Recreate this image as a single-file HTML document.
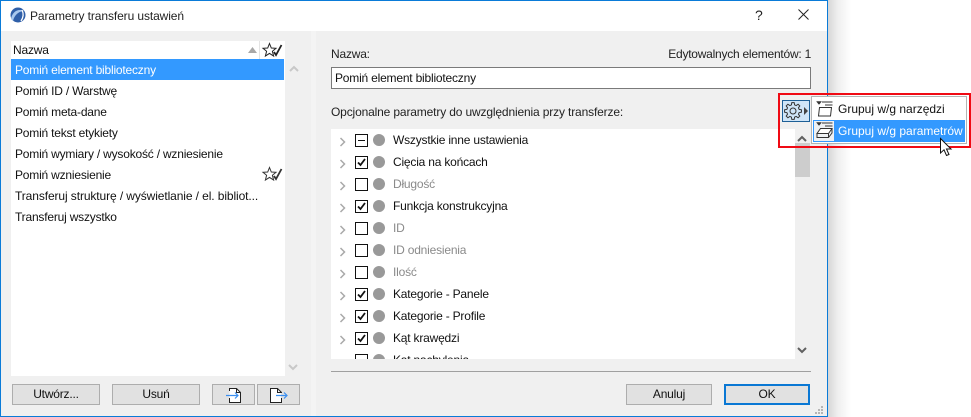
<!DOCTYPE html>
<html><head><meta charset="utf-8"><style>
html,body{margin:0;padding:0;background:#fff}
#p{position:relative;width:971px;height:417px;overflow:hidden;background:#fff;font-family:"Liberation Sans",sans-serif;font-size:12px;color:#111;letter-spacing:-.2px}
#p div{position:absolute;white-space:nowrap;box-sizing:border-box}
.t{line-height:16px;height:16px}
.btn{background:#e1e1e1;border:1px solid #adadad;height:21px;top:384px;text-align:center;line-height:19px}
.g{color:#8a8a8a}
svg{position:absolute;overflow:visible}
</style></head><body><div id="p">
<!-- shadow -->
<div style="left:827px;top:0;width:24px;height:417px;background:linear-gradient(90deg,#d4d4d4,#efefef 45%,#fff)"></div>
<!-- window -->
<div style="left:0;top:0;width:828px;height:417px;background:#f0f0f0;border:1px solid #0a7bd8"></div>
<div style="left:1px;top:1px;width:826px;height:30px;background:#fff"></div>
<svg style="left:10px;top:7px" width="16" height="16" viewBox="0 0 16 16"><circle cx="8" cy="8" r="7.5" fill="#2f5fa8"/><path d="M1 12C2 5 8 1 14 4 11 4 5 6 3 14Z" fill="#a8c8ee"/><path d="M12 3C14 7 13 11 11 14" stroke="#fff" stroke-width="1.3" fill="none"/></svg>
<div class="t" style="left:30px;top:8px;color:#222;letter-spacing:-.1px">Parametry transferu ustawień</div>
<div class="t" style="left:755px;top:7px;font-size:14px;letter-spacing:0;color:#222">?</div>
<svg style="left:798px;top:9px" width="11" height="11"><path d="M.5.5 10.5 10.5M10.5.5.5 10.5" stroke="#222" stroke-width="1" fill="none"/></svg>

<!-- left list -->
<div style="left:11px;top:41px;width:274px;height:335px;background:#fff"></div>
<div style="left:11px;top:59px;width:273px;height:21px;background:#3399ff"></div>
<div style="left:285px;top:41px;width:26px;height:335px;background:#f0f0f0"></div>
<div style="left:311px;top:31px;width:5px;height:385px;background:#f4f4f4"></div>
<div style="left:259px;top:41px;width:1px;height:18px;background:#e4e4e4"></div>
<div class="t" style="left:13px;top:42px">Nazwa</div>
<svg style="left:248px;top:47px" width="10" height="6"><path d="M0 6 4.500 0 9 6Z" fill="#a8a8a8"/></svg>
<svg style="left:263px;top:43px" width="20" height="14" viewBox="0 0 20 14"><path d="M6.500 .5 8.300 5 13 5.300 9.400 8.300 10.600 13 6.500 10.400 2.400 13 3.600 8.300 0 5.300 4.700 5Z" fill="#fff" stroke="#222" stroke-width="1"/><path d="M11 9 13 12 18.500 2" fill="none" stroke="#222" stroke-width="1.800"/></svg>
<div class="t" style="left:15px;top:62px;color:#fff">Pomiń element biblioteczny</div>
<div class="t" style="left:15px;top:83px">Pomiń ID / Warstwę</div>
<div class="t" style="left:15px;top:104px">Pomiń meta-dane</div>
<div class="t" style="left:15px;top:125px">Pomiń tekst etykiety</div>
<div class="t" style="left:15px;top:146px">Pomiń wymiary / wysokość / wzniesienie</div>
<div class="t" style="left:15px;top:167px">Pomiń wzniesienie</div>
<div class="t" style="left:15px;top:188px;letter-spacing:-.1px">Transferuj strukturę / wyświetlanie / el. bibliot...</div>
<div class="t" style="left:15px;top:209px">Transferuj wszystko</div>
<svg style="left:263px;top:167px" width="20" height="14" viewBox="0 0 20 14"><path d="M6.500 .5 8.300 5 13 5.300 9.400 8.300 10.600 13 6.500 10.400 2.400 13 3.600 8.300 0 5.300 4.700 5Z" fill="#fff" stroke="#333" stroke-width="1"/><path d="M11 9 13 12 18.500 2" fill="none" stroke="#333" stroke-width="1.800"/></svg>
<svg style="left:289px;top:65px" width="11" height="7"><path d="M1 6 5 2 9 6" fill="none" stroke="#c8c8c8" stroke-width="2"/></svg>
<svg style="left:288px;top:364px" width="11" height="7"><path d="M1 1 5 5 9 1" fill="none" stroke="#c8c8c8" stroke-width="2"/></svg>

<!-- left buttons -->
<div class="btn" style="left:12px;width:88px">Utwórz...</div>
<div class="btn" style="left:112px;width:88px">Usuń</div>
<div class="btn" style="left:212px;width:43px"></div>
<div class="btn" style="left:257px;width:43px"></div>
<svg style="left:226px;top:387px" width="16" height="16" viewBox="0 0 16 16"><path d="M3.500 4V1.500H10.500L14.500 5.500V15.500H3.500V11" fill="#fff" stroke="#222"/><path d="M10.500 1.500V5.500H14.500" fill="none" stroke="#222"/><path d="M0 8.500H12M9 5.500 12 8.500 9 11.500" fill="none" stroke="#3b8ff0" stroke-width="1.200"/></svg>
<svg style="left:270px;top:387px" width="18" height="16" viewBox="0 0 18 16"><path d="M.5 1.500H7.500L11.500 5.500V15.500H.5Z" fill="#fff" stroke="#222"/><path d="M7.500 1.500V5.500H11.500" fill="none" stroke="#222"/><path d="M11 6H13V11H11Z" fill="#e1e1e1"/><path d="M6 8.500H17M14 5.500 17 8.500 14 11.500" fill="none" stroke="#3b8ff0" stroke-width="1.200"/></svg>

<!-- right top -->
<div class="t" style="left:331px;top:46px;color:#222">Nazwa:</div>
<div class="t" style="right:160px;top:46px;color:#222;letter-spacing:-.24px">Edytowalnych elementów: 1</div>
<div style="left:331px;top:67px;width:480px;height:22px;background:#fff;border:1px solid #7a7a7a"></div>
<div class="t" style="left:335px;top:70px">Pomiń element biblioteczny</div>
<div class="t" style="left:331px;top:104px;color:#222;letter-spacing:-.15px">Opcjonalne parametry do uwzględnienia przy transferze:</div>

<!-- right list -->
<div style="left:331px;top:129px;width:464px;height:230px;background:#fff"></div>
<div style="left:795px;top:143px;width:15px;height:34px;background:#cdcdcd"></div>
<svg style="left:797px;top:135px" width="11" height="7"><path d="M1 6 5 2 9 6" fill="none" stroke="#606060" stroke-width="2"/></svg>
<svg style="left:797px;top:347px" width="11" height="7"><path d="M1 1 5 5 9 1" fill="none" stroke="#606060" stroke-width="2"/></svg>

<div style="left:331px;top:129px;width:464px;height:230px;overflow:hidden">
<svg style="left:9px;top:9px" width="6" height="240"><g fill="none" stroke="#a9a9a9" stroke-width="1.500"><path d="M.5 0 4.500 4 .5 8"/><path d="M.5 22 4.500 26 .5 30"/><path d="M.5 44 4.500 48 .5 52"/><path d="M.5 66 4.500 70 .5 74"/><path d="M.5 88 4.500 92 .5 96"/><path d="M.5 110 4.500 114 .5 118"/><path d="M.5 132 4.500 136 .5 140"/><path d="M.5 154 4.500 158 .5 162"/><path d="M.5 176 4.500 180 .5 184"/><path d="M.5 198 4.500 202 .5 206"/></g></svg>
<svg style="left:24px;top:5px" width="13" height="240"><g fill="#fff" stroke="#111"><rect x=".5" y=".5" width="12" height="12"/><rect x=".5" y="22.500" width="12" height="12"/><rect x=".5" y="44.500" width="12" height="12"/><rect x=".5" y="66.500" width="12" height="12"/><rect x=".5" y="88.500" width="12" height="12"/><rect x=".5" y="110.500" width="12" height="12"/><rect x=".5" y="132.500" width="12" height="12"/><rect x=".5" y="154.500" width="12" height="12"/><rect x=".5" y="176.500" width="12" height="12"/><rect x=".5" y="198.500" width="12" height="12"/><rect x=".5" y="220.500" width="12" height="12"/></g><path d="M3 6.500H10" stroke="#111"/><g fill="none" stroke="#111" stroke-width="1.800"><path d="M3 28.500 5.500 31 10 25"/><path d="M3 72.500 5.500 75 10 69"/><path d="M3 160.500 5.500 163 10 157"/><path d="M3 182.500 5.500 185 10 179"/><path d="M3 204.500 5.500 207 10 201"/></g></svg>
<svg style="left:42px;top:5px" width="12" height="240"><g fill="#999"><circle cx="6" cy="6" r="6"/><circle cx="6" cy="28" r="6"/><circle cx="6" cy="50" r="6"/><circle cx="6" cy="72" r="6"/><circle cx="6" cy="94" r="6"/><circle cx="6" cy="116" r="6"/><circle cx="6" cy="138" r="6"/><circle cx="6" cy="160" r="6"/><circle cx="6" cy="182" r="6"/><circle cx="6" cy="204" r="6"/><circle cx="6" cy="226" r="6"/></g></svg>
<div class="t" style="left:62px;top:3px">Wszystkie inne ustawienia</div>
<div class="t" style="left:62px;top:25px">Cięcia na końcach</div>
<div class="t g" style="left:62px;top:47px">Długość</div>
<div class="t" style="left:62px;top:69px">Funkcja konstrukcyjna</div>
<div class="t g" style="left:62px;top:91px">ID</div>
<div class="t g" style="left:62px;top:113px">ID odniesienia</div>
<div class="t g" style="left:62px;top:135px">Ilość</div>
<div class="t" style="left:62px;top:157px">Kategorie - Panele</div>
<div class="t" style="left:62px;top:179px">Kategorie - Profile</div>
<div class="t" style="left:62px;top:201px">Kąt krawędzi</div>
<div class="t" style="left:62px;top:223px">Kąt nachylenia</div>
</div>

<!-- bottom -->
<div style="left:331px;top:371px;width:480px;height:1px;background:#a0a0a0"></div>
<div class="btn" style="left:626px;width:86px">Anuluj</div>
<div class="btn" style="left:724px;width:86px;border:2px solid #0a78d4;line-height:17px">OK</div>
<svg style="left:815px;top:406px" width="9" height="9"><g fill="#b5b5b5"><rect x="6" y="0" width="2" height="2"/><rect x="3" y="3" width="2" height="2"/><rect x="6" y="3" width="2" height="2"/><rect x="0" y="6" width="2" height="2"/><rect x="3" y="6" width="2" height="2"/><rect x="6" y="6" width="2" height="2"/></g></svg>

<!-- popup -->
<div style="left:778px;top:93px;width:193px;height:55px;border:2px solid #f00a14"></div>
<div style="left:782px;top:100px;width:28px;height:22px;background:#cfe5f8;border:1px solid #1d5f96"></div>
<svg style="left:784px;top:102px" width="25" height="18" viewBox="0 0 25 18"><path d="M15.090 7.370 17.420 7.820 17.420 10.180 15.090 10.630 14.460 12.150 15.790 14.120 14.120 15.790 12.150 14.460 10.630 15.090 10.180 17.420 7.820 17.420 7.370 15.090 5.850 14.460 3.880 15.790 2.210 14.120 3.540 12.150 2.910 10.630 .58 10.180 .58 7.820 2.910 7.370 3.540 5.850 2.210 3.880 3.880 2.210 5.850 3.540 7.370 2.910 7.820 .58 10.180 .58 10.630 2.910 12.150 3.540 14.120 2.210 15.790 3.880 14.460 5.850Z" fill="none" stroke="#333"/><circle cx="9" cy="9" r="3" fill="none" stroke="#333"/><path d="M20 5 24 9 20 13Z" fill="#444"/></svg>
<div style="left:811px;top:96px;width:156px;height:48px;background:#fff;border:1px solid #b4b4b4"></div>
<div style="left:813px;top:120px;width:152px;height:22px;background:#3399ff"></div>
<div style="left:814px;top:121px;width:20px;height:20px;background:#eef1f4"></div>
<svg style="left:816px;top:101px" width="17" height="16" viewBox="0 0 17 16"><path d="M.5 .5H5.500L3 3.500Z" fill="#333" stroke="#333" stroke-width=".5"/><path d="M6 1H16.500M9 4H16.500" fill="none" stroke="#333"/><path d="M3.500 6.500H15.500L14.500 15H2.500Z" fill="#fff" stroke="#333"/></svg>
<svg style="left:816px;top:122px" width="17" height="17" viewBox="0 0 17 17"><path d="M.5 .5H5.500L3 3.500Z" fill="#333" stroke="#333" stroke-width=".5"/><path d="M6 1H16.500M9 4H16.500" fill="none" stroke="#333"/><path d="M4.500 6.500H16L12.500 11.500H1Z" fill="#fff" stroke="#333"/><path d="M1 11.500V15.500H12.500L16 11V6.500M12.500 11.500V15.500" fill="none" stroke="#333"/></svg>
<div class="t" style="left:838px;top:101px;color:#111;letter-spacing:0">Grupuj w/g narzędzi</div>
<div class="t" style="left:838px;top:123px;color:#fff;letter-spacing:0">Grupuj w/g parametrów</div>
<svg style="left:940px;top:138px" width="14" height="20" viewBox="0 0 14 20"><path d="M.5.500V15L4 11.800 6.500 17.500 9 16.500 6.500 11H11Z" fill="#fff" stroke="#111"/></svg>
</div></body></html>
